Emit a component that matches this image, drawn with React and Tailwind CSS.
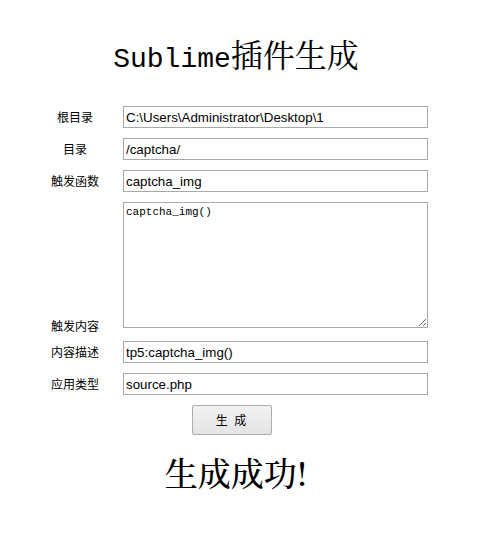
const fields = [
  { label: "根目录", value: "C:\\Users\\Administrator\\Desktop\\1" },
  { label: "目录", value: "/captcha/" },
  { label: "触发函数", value: "captcha_img" },
];

const moreFields = [
  { label: "内容描述", value: "tp5:captcha_img()" },
  { label: "应用类型", value: "source.php" },
];

const labelCls =
  "w-[72px] text-center text-[12px] leading-[14px] text-black [font-family:'Noto_Sans_CJK_SC',sans-serif]";
const inputCls =
  "ml-[12px] h-[22px] w-[305px] border border-[#a9a9a9] bg-white px-[2px] text-[13.33px] text-black outline-none [font-family:'Liberation_Sans',Arial,sans-serif]";

function Row({ label, value }) {
  return (
    <div className="flex items-center">
      <div className={labelCls}>{label}</div>
      <input className={inputCls} defaultValue={value} />
    </div>
  );
}

export default function App() {
  return (
    <div className="min-h-[534px] w-[483px] bg-white">
      <div className="w-[472px] pt-[30px]">
        <h1 className="text-center text-[32px] leading-[46px] text-black">
          <span className="text-[28px] [font-family:'Liberation_Mono',monospace]">
            Sublime
          </span>
          <span className="[font-family:'Noto_Serif_CJK_SC','Noto_Sans_CJK_SC',serif]">
            插件生成
          </span>
        </h1>

        <div className="ml-[39px] mt-[23px] flex flex-col gap-[10px]">
          {fields.map((f) => (
            <Row key={f.label} {...f} />
          ))}

          <div className="flex items-end">
            <div className={labelCls + " mb-[-5px]"}>触发内容</div>
            <textarea
              className="ml-[12px] h-[126px] w-[305px] resize border border-[#a9a9a9] bg-white px-[2px] py-[1px] text-[11px] leading-[16px] text-black outline-none [font-family:'Liberation_Mono',monospace]"
              defaultValue="captcha_img()"
            />
          </div>

          <div className="mt-[3px] flex flex-col gap-[10px]">
            {moreFields.map((f) => (
              <Row key={f.label} {...f} />
            ))}
          </div>

          <div className="flex">
            <button className="ml-[153px] h-[30px] w-[80px] rounded-[2px] border border-[#acacac] bg-gradient-to-b from-[#f2f2f2] to-[#e3e3e3] text-[12px] tracking-[2px] text-black [font-family:'Noto_Sans_CJK_SC',sans-serif]">
              生 成
            </button>
          </div>
        </div>

        <div className="mt-[17px] text-center text-[33px] font-medium leading-[40px] text-black [font-family:'Noto_Serif_CJK_SC','Noto_Sans_CJK_SC',serif]">
          生成成功!
        </div>
      </div>
    </div>
  );
}
